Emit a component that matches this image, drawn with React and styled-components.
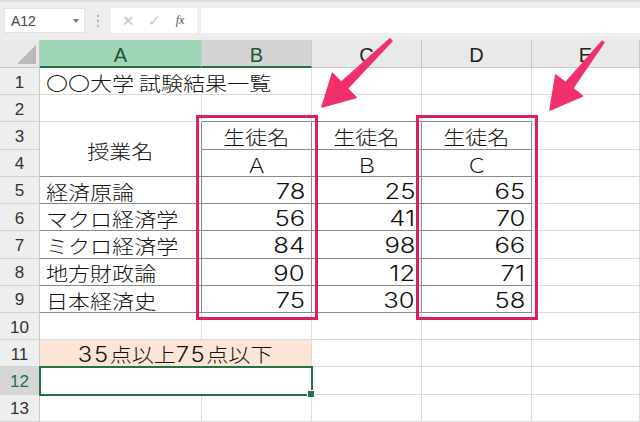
import React from "react";
import styled, { createGlobalStyle } from "styled-components";

const Global = createGlobalStyle`
  html, body { margin: 0; padding: 0; background: #ffffff; overflow: hidden; }
  * { box-sizing: border-box; }
`;

const JP = `"Noto Sans CJK JP", "Noto Sans", sans-serif`;
const UI = `"Liberation Sans", Arial, sans-serif`;
const NUM = `Inter, "Noto Sans", sans-serif`;

const GRID = "#dcdcdc";
const DARK = "#8a8a8a";
const GREEN = "#217346";

const Page = styled.div`
  position: relative;
  width: 640px;
  height: 422px;
  overflow: hidden;
  background: #fff;
`;

const Toolbar = styled.div`
  height: 40px;
  background: #ededed;
  border-top: 2px solid #e0e0e0;
  display: flex;
  align-items: flex-start;
  padding: 6px 0 0 4px;
`;

const NameBox = styled.div`
  width: 81px;
  height: 25px;
  background: #fff;
  border: 1px solid #e2e2e2;
  display: flex;
  align-items: center;
  justify-content: space-between;
  padding: 0 5px 0 6px;
  font-family: ${UI};
  font-size: 14px;
  color: #444;
`;

const Caret = styled.span`
  width: 0;
  height: 0;
  border-left: 3px solid transparent;
  border-right: 3px solid transparent;
  border-top: 4px solid #777;
`;

const Grip = styled.div`
  width: 26px;
  height: 25px;
  display: flex;
  align-items: center;
  justify-content: center;
`;

const FuncBox = styled.div`
  width: 86px;
  height: 25px;
  background: #fff;
  display: flex;
  align-items: center;
  justify-content: space-around;
  padding: 0 4px;
`;

const FuncBtn = styled.span`
  font-family: ${(p) => (p.$serif ? `"Liberation Serif", serif` : UI)};
  font-style: ${(p) => (p.$serif ? "italic" : "normal")};
  font-size: ${(p) => (p.$serif ? "12px" : "15px")};
  color: ${(p) => (p.$serif ? "#555" : "#c4c4c4")};
  width: 22px;
  text-align: center;
`;

const FormulaInput = styled.div`
  flex: 1;
  height: 25px;
  margin-left: 4px;
  background: #fff;
`;

const Sheet = styled.div`
  display: grid;
  grid-template-columns: 40px 162px 110px 110px 110px 1fr;
  grid-template-rows: 28px repeat(13, 27.23px);
  font-family: ${JP};
  color: #111;
`;

const Corner = styled.div`
  background: #e9e9e9;
  border-right: 1px solid #c8c8c8;
  border-bottom: 1px solid #c8c8c8;
  display: flex;
  align-items: flex-end;
  justify-content: flex-end;
  padding: 0 3px 3px 0;
`;

const Tri = styled.div`
  width: 0;
  height: 0;
  border-left: 19px solid transparent;
  border-bottom: 19px solid #b9b9b9;
`;

const ColHead = styled.div`
  background: ${(p) => (p.$active ? "#a0d6b8" : p.$sel ? "#d4d4d4" : "#e9e9e9")};
  color: ${(p) => (p.$active || p.$sel ? "#1d5535" : "#222")};
  border-right: 1px solid #c8c8c8;
  border-bottom: ${(p) => (p.$active || p.$sel ? `2px solid ${GREEN}` : "1px solid #c8c8c8")};
  font-family: ${UI};
  font-size: 20px;
  display: flex;
  align-items: center;
  justify-content: center;
  padding-top: 4px;
`;

const RowHead = styled.div`
  background: ${(p) => (p.$active ? "#d6d6d6" : "#eeeeee")};
  color: ${(p) => (p.$active ? GREEN : "#333")};
  border-right: 1px solid #c8c8c8;
  border-bottom: 1px solid #d2d2d2;
  font-family: ${UI};
  font-size: 17px;
  display: flex;
  align-items: center;
  justify-content: center;
  padding-top: 3px;
`;

const Cell = styled.div`
  position: relative;
  grid-column: span ${(p) => p.$cols || 1};
  grid-row: span ${(p) => p.$rows || 1};
  background: ${(p) => p.$bg || "transparent"};
  border-right: 1px solid ${(p) => (p.$noR ? "transparent" : p.$dr ? DARK : GRID)};
  border-bottom: 1px solid ${(p) => (p.$db ? DARK : GRID)};
  display: flex;
  align-items: center;
  justify-content: ${(p) =>
    p.$align === "right" ? "flex-end" : p.$align === "center" ? "center" : "flex-start"};
  padding: 3px 6px 0 6px;
  white-space: nowrap;
  overflow: visible;
  z-index: ${(p) => (p.$over ? 2 : 1)};
  ${(p) =>
    p.$selected &&
    `
    outline: 2px solid ${GREEN};
    outline-offset: -1px;
    z-index: 3;
    &::after {
      content: "";
      position: absolute;
      right: -4px;
      bottom: -4px;
      width: 6px;
      height: 6px;
      background: ${GREEN};
      border: 1px solid #fff;
    }
  `}
`;

const Txt = styled.span`
  display: inline-block;
  font-size: 19.5px;
  font-weight: 300;
  line-height: 1;
  transform: scaleX(1.13);
  transform-origin: ${(p) => (p.$origin === "center" ? "center" : "left")} center;
`;

const Dg = styled.span`
  font-family: ${NUM};
  font-weight: 300;
  font-size: 21px;
  letter-spacing: 1.5px;
`;

const Num = styled.span`
  display: inline-block;
  font-family: ${NUM};
  font-weight: 300;
  font-size: 21px;
  line-height: 1;
  transform: scaleX(1.22);
  transform-origin: right center;
`;

const RedBox = styled.div`
  position: absolute;
  top: 115px;
  left: ${(p) => p.$left}px;
  width: 122px;
  height: 205px;
  border: 3px solid #dd1f5e;
  pointer-events: none;
  z-index: 10;
`;

const Overlay = styled.svg`
  position: absolute;
  top: 0;
  left: 0;
  width: 640px;
  height: 422px;
  pointer-events: none;
  z-index: 11;
`;

const cols = ["A", "B", "C", "D", "E"];

const subjects = [
  ["経済原論", 78, 25, 65],
  ["マクロ経済学", 56, 41, 70],
  ["ミクロ経済学", 84, 98, 66],
  ["地方財政論", 90, 12, 71],
  ["日本経済史", 75, 30, 58],
];

export default function App() {
  return (
    <Page>
      <Global />
      <Toolbar>
        <NameBox>
          <span>A12</span>
          <Caret />
        </NameBox>
        <Grip>
          <svg width="4" height="14" viewBox="0 0 4 14">
            <circle cx="2" cy="2" r="1.2" fill="#b5b5b5" />
            <circle cx="2" cy="7" r="1.2" fill="#b5b5b5" />
            <circle cx="2" cy="12" r="1.2" fill="#b5b5b5" />
          </svg>
        </Grip>
        <FuncBox>
          <FuncBtn>✕</FuncBtn>
          <FuncBtn>✓</FuncBtn>
          <FuncBtn $serif>fx</FuncBtn>
        </FuncBox>
        <FormulaInput />
      </Toolbar>

      <Sheet>
        <Corner>
          <Tri />
        </Corner>
        {cols.map((c) => (
          <ColHead key={c} $active={c === "A"} $sel={c === "B"}>
            {c}
          </ColHead>
        ))}

        {/* Row 1 */}
        <RowHead>1</RowHead>
        <Cell $noR $over>
          <Txt>〇〇大学 試験結果一覧</Txt>
        </Cell>
        <Cell />
        <Cell />
        <Cell />
        <Cell />

        {/* Row 2 */}
        <RowHead>2</RowHead>
        <Cell />
        <Cell $db />
        <Cell $db />
        <Cell $db />
        <Cell />

        {/* Row 3 */}
        <RowHead>3</RowHead>
        <Cell $rows={2} $dr $db $align="center">
          <Txt $origin="center">授業名</Txt>
        </Cell>
        <Cell $dr $db $align="center">
          <Txt $origin="center">生徒名</Txt>
        </Cell>
        <Cell $dr $db $align="center">
          <Txt $origin="center">生徒名</Txt>
        </Cell>
        <Cell $dr $db $align="center">
          <Txt $origin="center">生徒名</Txt>
        </Cell>
        <Cell />

        {/* Row 4 */}
        <RowHead>4</RowHead>
        {["Ａ", "Ｂ", "Ｃ"].map((l) => (
          <Cell key={l} $dr $db $align="center">
            <Txt $origin="center">{l}</Txt>
          </Cell>
        ))}
        <Cell />

        {subjects.map(([name, a, b, c], i) => (
          <React.Fragment key={name}>
            <RowHead>{i + 5}</RowHead>
            <Cell $dr $db>
              <Txt>{name}</Txt>
            </Cell>
            {[a, b, c].map((v, j) => (
              <Cell key={j} $dr $db $align="right">
                <Num>{v}</Num>
              </Cell>
            ))}
            <Cell />
          </React.Fragment>
        ))}

        {/* Row 10 */}
        <RowHead>10</RowHead>
        <Cell />
        <Cell />
        <Cell />
        <Cell />
        <Cell />

        {/* Row 11 */}
        <RowHead>11</RowHead>
        <Cell $cols={2} $bg="#fce4d6" $align="center">
          <Txt $origin="center">
            <Dg>35</Dg>点以上<Dg>75</Dg>点以下
          </Txt>
        </Cell>
        <Cell />
        <Cell />
        <Cell />

        {/* Row 12 */}
        <RowHead $active>12</RowHead>
        <Cell $cols={2} $selected />
        <Cell />
        <Cell />
        <Cell />

        {/* Row 13 */}
        <RowHead>13</RowHead>
        <Cell />
        <Cell />
        <Cell />
        <Cell />
        <Cell />
      </Sheet>

      <RedBox $left={196} />
      <RedBox $left={416} />

      <Overlay viewBox="0 0 640 422">
        <polygon
          points="390,38.9 341.2,82.2 332.4,73.2 322,107 356.2,97.6 347.4,88.6 392,41.1"
          fill="#f1306b"
          stroke="#f1306b"
          strokeWidth="1.5"
          strokeLinejoin="round"
        />
        <polygon
          points="602.1,41.3 565.5,82.7 555.7,75 550,110 582.5,96 572.7,88.3 603.9,42.7"
          fill="#f1306b"
          stroke="#f1306b"
          strokeWidth="1.5"
          strokeLinejoin="round"
        />
      </Overlay>
    </Page>
  );
}
